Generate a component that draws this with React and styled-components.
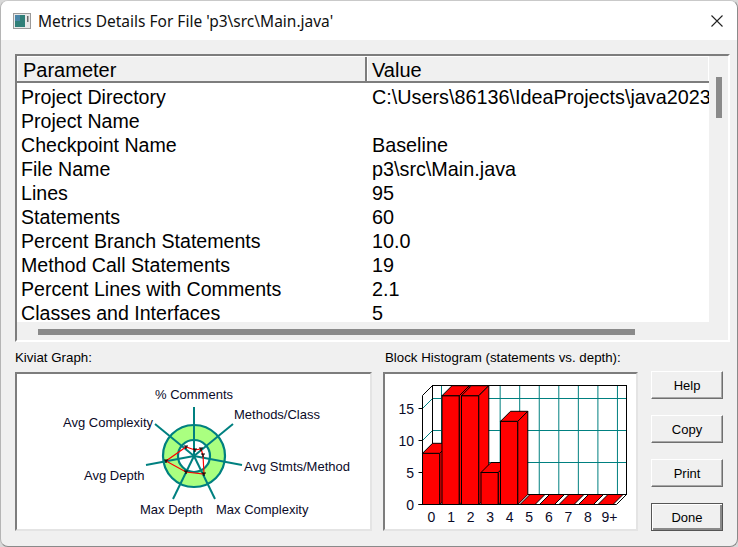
import React from 'react';
import styled, {createGlobalStyle} from 'styled-components';

const GlobalStyle = createGlobalStyle`
    html, body {
        margin: 0;
        padding: 0;
        background: #d9d9d9;
    }
`;
const Window = styled.div`
    width: 738px;
    height: 547px;
    box-sizing: border-box;
    background: #f0f0f0;
    border: 1px solid #8a8a8a;
    border-top-color: #c9c9c9;
    border-left-color: #b5b5b5;
    border-radius: 8px;
    overflow: hidden;
    display: flex;
    flex-direction: column;
    font-family: "Liberation Sans", Arial, sans-serif;
    color: #000;
`;
const TitleBar = styled.div`
    height: 39px;
    flex: none;
    background: #fff;
    display: flex;
    align-items: center;
    padding: 0 14px 0 12px;
`;
const TitleText = styled.div`
    flex: 1;
    margin-left: 7px;
    font-family: "Noto Sans", sans-serif;
    font-size: 15.5px;
    color: #111;
    white-space: nowrap;
`;
const Content = styled.div`
    flex: 1;
    display: flex;
    flex-direction: column;
    padding: 14px 8px 0 14px;
`;
const ListFrame = styled.div`
    width: 715px;
    height: 288px;
    box-sizing: border-box;
    border: 2px solid;
    border-color: #7d7d7d #fff #fff #7d7d7d;
    display: grid;
    grid-template-columns: 692px 1fr;
    grid-template-rows: 1fr 18px;
`;
const ListMain = styled.div`
    overflow: hidden;
    display: flex;
    flex-direction: column;
`;
const HeaderRow = styled.div`
    height: 27px;
    flex: none;
    box-sizing: border-box;
    display: flex;
    border-top: 1px solid #fff;
    border-bottom: 2px solid #7d7d7d;
    background: #f0f0f0;
`;
const HeaderCell = styled.div`
    width: ${p => p.$width}px;
    flex: none;
    box-sizing: border-box;
    padding-left: ${p => p.$pad}px;
    border-left: 1px solid #fff;
    border-right: ${p => p.$last ? '1px solid #fff' : '2px solid #7d7d7d'};
    font-size: 20px;
    line-height: 26px;
    white-space: nowrap;
`;
const Rows = styled.div`
    flex: 1;
    background: #fff;
    padding-top: 2px;
    overflow: hidden;
`;
const Row = styled.div`
    height: 24px;
    display: flex;
    font-size: 19.8px;
    line-height: 24px;
    white-space: nowrap;
`;
const ParamCell = styled.div`
    width: 351px;
    flex: none;
    padding-left: 4px;
    font-size: 19.6px;
`;
const ValueCell = styled.div`
    flex: 1;
    min-width: 0;
    overflow: hidden;
`;
const VScroll = styled.div`
    padding: 21px 0 0 7px;
`;
const VThumb = styled.div`
    width: 6px;
    height: 41px;
    background: #8a8a8a;
`;
const HScroll = styled.div`
    padding: 7px 0 0 21px;
`;
const HThumb = styled.div`
    width: 597px;
    height: 6px;
    background: #8a8a8a;
`;
const Bottom = styled.div`
    display: flex;
    margin-top: 9px;
`;
const GraphColumn = styled.div`
    width: ${p => p.$width}px;
    margin-right: ${p => p.$gap}px;
    flex: none;
`;
const GraphLabel = styled.div`
    font-size: 13.3px;
    line-height: 14px;
    height: 21px;
    padding-left: ${p => p.$indent || 0}px;
    box-sizing: border-box;
    white-space: nowrap;
`;
const GraphFrame = styled.div`
    height: 159px;
    box-sizing: border-box;
    background: #fff;
    border: 2px solid;
    border-color: #7d7d7d #e4e4e4 #e4e4e4 #7d7d7d;
    overflow: hidden;
`;
const Chart = styled.svg`
    display: block;
    font-family: "Liberation Sans", Arial, sans-serif;
    font-size: ${p => p.$fontSize}px;
    fill: #0a0a28;
`;
const Buttons = styled.div`
    display: flex;
    flex-direction: column;
    gap: 16px;
    padding-top: 20px;
`;
const Button = styled.button`
    width: 72px;
    height: 28px;
    box-sizing: border-box;
    padding: 0;
    font-family: "Liberation Sans", Arial, sans-serif;
    font-size: 13px;
    color: #000;
    background: #f0f0f0;
    border: 1px solid;
    border-color: #fff #6f6f6f #6f6f6f #fff;
    box-shadow: inset -1px -1px 0 #a8a8a8;
    ${p => p.$primary && `
        border-color: #555;
        box-shadow: inset 1px 1px 0 #fff, inset -2px -2px 0 #8a8a8a;
    `}
`;

const metrics = [
    ['Project Directory', 'C:\\Users\\86136\\IdeaProjects\\java2023\\p3'],
    ['Project Name', ''],
    ['Checkpoint Name', 'Baseline'],
    ['File Name', 'p3\\src\\Main.java'],
    ['Lines', '95'],
    ['Statements', '60'],
    ['Percent Branch Statements', '10.0'],
    ['Method Call Statements', '19'],
    ['Percent Lines with Comments', '2.1'],
    ['Classes and Interfaces', '5'],
];

// svg coordinates below are page coordinates, shifted by the frame's origin
const KX = 17;
const KY = 374;
const kiviatCenter = [194 - KX, 456 - KY];
const spokes = [
    [194, 407], [233, 424], [242, 465], [215, 499], [173, 499], [146, 465], [155, 424],
];
const kiviatPoints = [
    [195, 450], [201, 449], [203, 455], [204, 474], [186, 472], [166, 461], [186, 447],
];
const kiviatLabels = [
    ['% Comments', 155, 399],
    ['Methods/Class', 234, 419],
    ['Avg Complexity', 63, 427],
    ['Avg Stmts/Method', 244, 471],
    ['Avg Depth', 84, 480],
    ['Max Depth', 140, 514],
    ['Max Complexity', 216, 514],
];

const KiviatGraph = () => {
    const pts = kiviatPoints.map(([x, y]) => [x - KX, y - KY]);
    return (
        <Chart width="353" height="155" $fontSize={13}>
            <circle cx={kiviatCenter[0]} cy={kiviatCenter[1]} r="31" fill="#aaff80" stroke="#008080" strokeWidth="2.2" />
            <circle cx={kiviatCenter[0]} cy={kiviatCenter[1]} r="16" fill="#fff" stroke="#008080" strokeWidth="2.2" />
            {spokes.map(([x, y], i) => (
                <line key={i} x1={kiviatCenter[0]} y1={kiviatCenter[1]} x2={x - KX} y2={y - KY} stroke="#008080" strokeWidth="2" />
            ))}
            <polygon points={pts.map(p => p.join(',')).join(' ')} fill="none" stroke="#ff0000" strokeWidth="1.2" />
            {pts.map(([x, y], i) => (
                <path key={i} d={`M${x - 2} ${y - 1}h4M${x} ${y - 1}v3`} stroke="#000" strokeWidth="1.2" fill="none" />
            ))}
            {kiviatLabels.map(([text, x, y]) => (
                <text key={text} x={x - KX} y={y - KY}>{text}</text>
            ))}
        </Chart>
    );
};

const HX = 385;
const HY = 374;
const hx = x => x - HX;
const hy = y => y - HY;
const STEP = 19.5;
const BAR_W = 17.3;
const FLAT_W = 15;
const DEPTH = 10;
const BASE_X = 422.5;
const BASE_Y = 504.5;
const UNIT = 6.4;
const counts = [8, 17, 17, 5, 13, 0, 0, 0, 0, 0];
const binLabels = ['0', '1', '2', '3', '4', '5', '6', '7', '8', '9+'];

const Bar = ({index, value}) => {
    const left = hx(BASE_X + index * STEP);
    const right = left + BAR_W;
    const bottom = hy(BASE_Y);
    const top = bottom - value * UNIT;
    if (value === 0) {
        const flatRight = left + FLAT_W;
        return <polygon points={`${left},${bottom} ${left + DEPTH},${bottom - DEPTH} ${flatRight + DEPTH},${bottom - DEPTH} ${flatRight},${bottom}`} fill="#ff0000" stroke="#000" />;
    }
    return (
        <g fill="#ff0000" stroke="#000" strokeWidth="1">
            <rect x={left} y={top} width={BAR_W} height={bottom - top} />
            <polygon points={`${left},${top} ${left + DEPTH},${top - DEPTH} ${right + DEPTH},${top - DEPTH} ${right},${top}`} />
            <polygon points={`${right},${top} ${right + DEPTH},${top - DEPTH} ${right + DEPTH},${bottom - DEPTH} ${right},${bottom}`} />
        </g>
    );
};

const BlockHistogram = () => {
    const wallLeft = hx(432.5);
    const wallRight = hx(626.5);
    const wallTop = hy(385.5);
    const wallBottom = hy(494.5);
    const frontX = hx(BASE_X);
    const frontY = hy(BASE_Y);
    return (
        <Chart width="251" height="155" $fontSize={14}>
            {[398.5, 430.5, 462.5].map(y => (
                <g key={y} stroke="#008080" fill="none">
                    <line x1={wallLeft} x2={wallRight} y1={hy(y)} y2={hy(y)} />
                    <line x1={frontX} x2={wallLeft} y1={hy(y + 10)} y2={hy(y)} />
                </g>
            ))}
            {[0, 1, 2, 3, 4, 5, 6, 7, 8, 9].map(i => (
                <line key={i} x1={hx(441.5 + i * 19.55)} x2={hx(441.5 + i * 19.55)} y1={wallTop} y2={wallBottom} stroke="#008080" />
            ))}
            <rect x={wallLeft} y={wallTop} width={wallRight - wallLeft} height={wallBottom - wallTop} fill="none" stroke="#000" />
            <path d={`M${frontX} ${frontY}V${hy(395.5)}L${wallLeft} ${wallTop}M${frontX} ${frontY}L${wallLeft} ${wallBottom}M${wallRight} ${wallBottom}L${wallRight - DEPTH} ${frontY}`} fill="none" stroke="#000" />
            {counts.map((value, i) => <Bar key={i} index={i} value={value} />)}
            <path d={`M${frontX - 4} ${frontY}H${wallRight - DEPTH}`} stroke="#000" fill="none" />
            {[0, 5, 10, 15].map(n => (
                <g key={n}>
                    <line x1={frontX - 4} x2={frontX} y1={frontY - n * UNIT} y2={frontY - n * UNIT} stroke="#000" />
                    <text x={hx(414)} y={frontY - n * UNIT + 5} textAnchor="end">{n}</text>
                </g>
            ))}
            {binLabels.map((label, i) => (
                <text key={label} x={hx(431.5 + i * 19.55 + (i === 9 ? 2 : 0))} y={hy(522)} textAnchor="middle">{label}</text>
            ))}
        </Chart>
    );
};

const AppIcon = () => (
    <svg width="18" height="16" viewBox="0 0 18 16">
        <rect x="0.5" y="0.5" width="17" height="15" fill="#e8e8e8" stroke="#9a9a9a" />
        <rect x="2" y="2" width="10" height="12" fill="#2f7f78" />
        <rect x="2" y="2" width="5" height="6" fill="#4a86a8" />
        <rect x="14" y="3" width="1.5" height="6" fill="#6a6a6a" />
    </svg>
);

const CloseIcon = () => (
    <svg width="12" height="12" viewBox="0 0 12 12">
        <path d="M0.5 0.5L11.5 11.5M11.5 0.5L0.5 11.5" stroke="#222" strokeWidth="1.1" fill="none" />
    </svg>
);

const App = () => (
    <Window>
        <GlobalStyle />
        <TitleBar>
            <AppIcon />
            <TitleText>Metrics Details For File 'p3\src\Main.java'</TitleText>
            <CloseIcon />
        </TitleBar>
        <Content>
            <ListFrame>
                <ListMain>
                    <HeaderRow>
                        <HeaderCell $width={350} $pad={5}>Parameter</HeaderCell>
                        <HeaderCell $width={342} $pad={4} $last>Value</HeaderCell>
                    </HeaderRow>
                    <Rows>
                        {metrics.map(([name, value]) => (
                            <Row key={name}>
                                <ParamCell>{name}</ParamCell>
                                <ValueCell>{value}</ValueCell>
                            </Row>
                        ))}
                    </Rows>
                </ListMain>
                <VScroll><VThumb /></VScroll>
                <HScroll><HThumb /></HScroll>
                <div />
            </ListFrame>
            <Bottom>
                <GraphColumn $width={357} $gap={11}>
                    <GraphLabel>Kiviat Graph:</GraphLabel>
                    <GraphFrame><KiviatGraph /></GraphFrame>
                </GraphColumn>
                <GraphColumn $width={255} $gap={13}>
                    <GraphLabel $indent={2}>Block Histogram (statements vs. depth):</GraphLabel>
                    <GraphFrame><BlockHistogram /></GraphFrame>
                </GraphColumn>
                <Buttons>
                    <Button>Help</Button>
                    <Button>Copy</Button>
                    <Button>Print</Button>
                    <Button $primary>Done</Button>
                </Buttons>
            </Bottom>
        </Content>
    </Window>
);

export default App;
